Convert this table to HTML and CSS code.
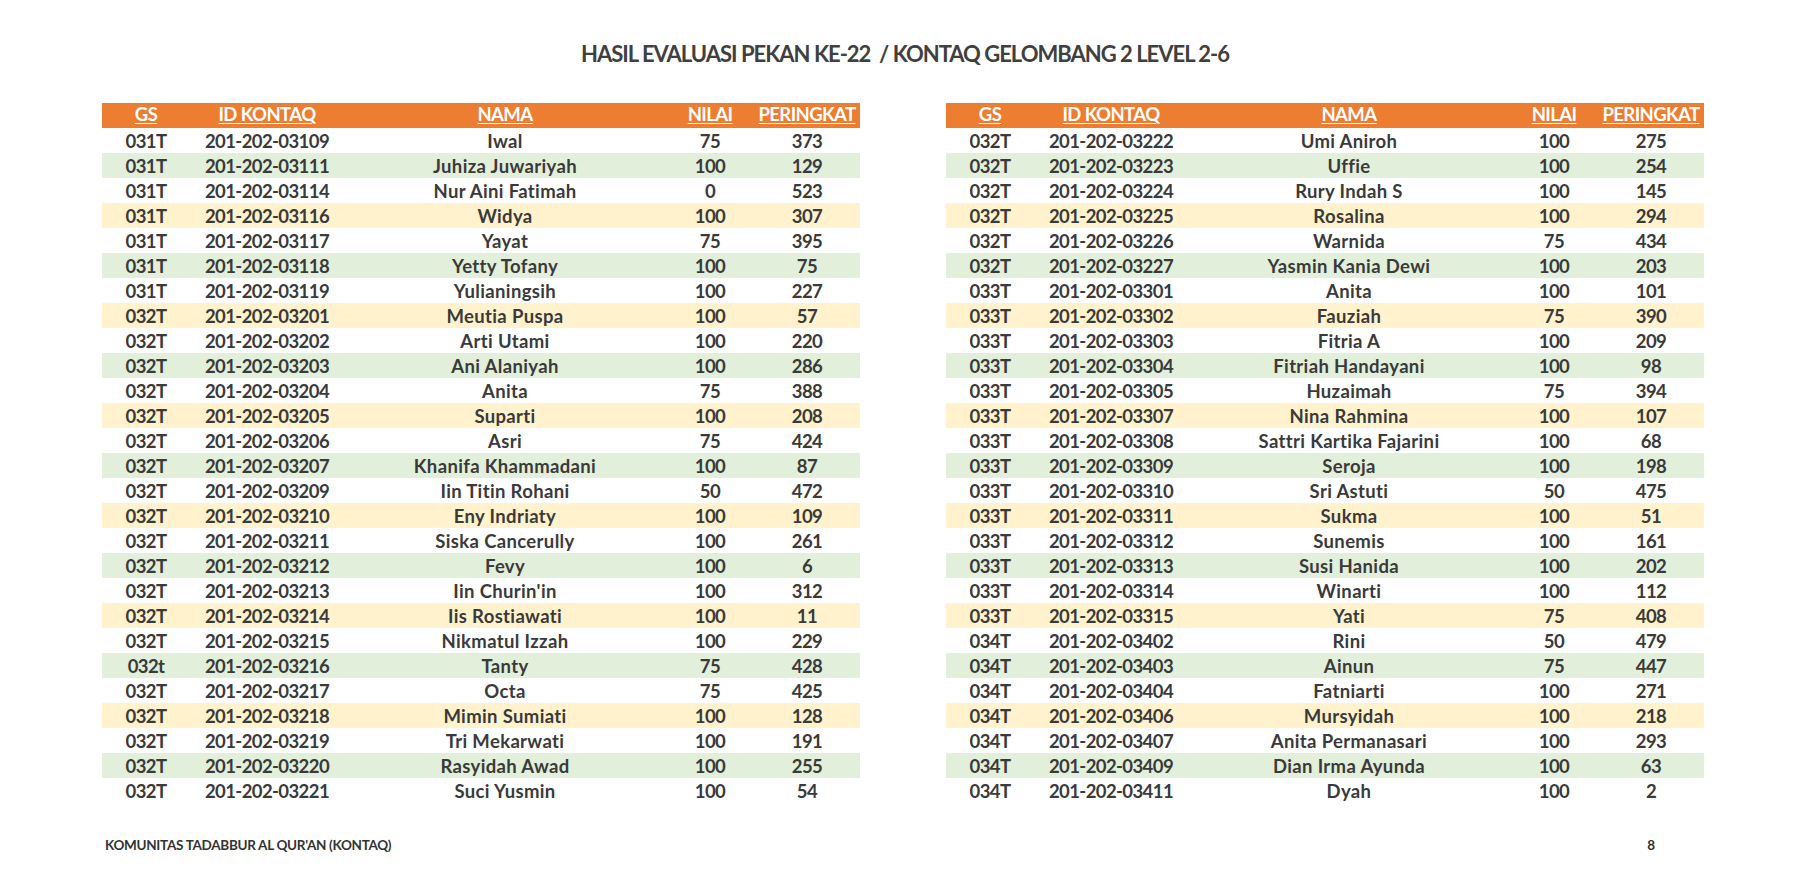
FILE: index.html
```html
<!DOCTYPE html>
<html lang="id">
<head>
<meta charset="utf-8">
<title>Hasil Evaluasi Pekan Ke-22</title>
<link rel="stylesheet" href="styles.css">
</head>
<body>
<div class="page">
  <h1 class="title">HASIL EVALUASI PEKAN KE-22  / KONTAQ GELOMBANG 2 LEVEL 2-6</h1>
  <div class="tables">
    <table class="grid">
      <colgroup><col class="c-gs"><col class="c-id"><col class="c-nama"><col class="c-nilai"><col class="c-rank"></colgroup>
      <thead><tr><th><span>GS</span></th><th><span>ID KONTAQ</span></th><th><span>NAMA</span></th><th><span>NILAI</span></th><th><span>PERINGKAT</span></th></tr></thead>
      <tbody>
        <tr><td>031T</td><td>201-202-03109</td><td>Iwal</td><td>75</td><td>373</td></tr>
        <tr><td>031T</td><td>201-202-03111</td><td>Juhiza Juwariyah</td><td>100</td><td>129</td></tr>
        <tr><td>031T</td><td>201-202-03114</td><td>Nur Aini Fatimah</td><td>0</td><td>523</td></tr>
        <tr><td>031T</td><td>201-202-03116</td><td>Widya</td><td>100</td><td>307</td></tr>
        <tr><td>031T</td><td>201-202-03117</td><td>Yayat</td><td>75</td><td>395</td></tr>
        <tr><td>031T</td><td>201-202-03118</td><td>Yetty Tofany</td><td>100</td><td>75</td></tr>
        <tr><td>031T</td><td>201-202-03119</td><td>Yulianingsih</td><td>100</td><td>227</td></tr>
        <tr><td>032T</td><td>201-202-03201</td><td>Meutia Puspa</td><td>100</td><td>57</td></tr>
        <tr><td>032T</td><td>201-202-03202</td><td>Arti Utami</td><td>100</td><td>220</td></tr>
        <tr><td>032T</td><td>201-202-03203</td><td>Ani Alaniyah</td><td>100</td><td>286</td></tr>
        <tr><td>032T</td><td>201-202-03204</td><td>Anita</td><td>75</td><td>388</td></tr>
        <tr><td>032T</td><td>201-202-03205</td><td>Suparti</td><td>100</td><td>208</td></tr>
        <tr><td>032T</td><td>201-202-03206</td><td>Asri</td><td>75</td><td>424</td></tr>
        <tr><td>032T</td><td>201-202-03207</td><td>Khanifa Khammadani</td><td>100</td><td>87</td></tr>
        <tr><td>032T</td><td>201-202-03209</td><td>Iin Titin Rohani</td><td>50</td><td>472</td></tr>
        <tr><td>032T</td><td>201-202-03210</td><td>Eny Indriaty</td><td>100</td><td>109</td></tr>
        <tr><td>032T</td><td>201-202-03211</td><td>Siska Cancerully</td><td>100</td><td>261</td></tr>
        <tr><td>032T</td><td>201-202-03212</td><td>Fevy</td><td>100</td><td>6</td></tr>
        <tr><td>032T</td><td>201-202-03213</td><td>Iin Churin'in</td><td>100</td><td>312</td></tr>
        <tr><td>032T</td><td>201-202-03214</td><td>Iis Rostiawati</td><td>100</td><td>11</td></tr>
        <tr><td>032T</td><td>201-202-03215</td><td>Nikmatul Izzah</td><td>100</td><td>229</td></tr>
        <tr><td>032t</td><td>201-202-03216</td><td>Tanty</td><td>75</td><td>428</td></tr>
        <tr><td>032T</td><td>201-202-03217</td><td>Octa</td><td>75</td><td>425</td></tr>
        <tr><td>032T</td><td>201-202-03218</td><td>Mimin Sumiati</td><td>100</td><td>128</td></tr>
        <tr><td>032T</td><td>201-202-03219</td><td>Tri Mekarwati</td><td>100</td><td>191</td></tr>
        <tr><td>032T</td><td>201-202-03220</td><td>Rasyidah Awad</td><td>100</td><td>255</td></tr>
        <tr><td>032T</td><td>201-202-03221</td><td>Suci Yusmin</td><td>100</td><td>54</td></tr>
      </tbody>
    </table>
    <table class="grid">
      <colgroup><col class="c-gs"><col class="c-id"><col class="c-nama"><col class="c-nilai"><col class="c-rank"></colgroup>
      <thead><tr><th><span>GS</span></th><th><span>ID KONTAQ</span></th><th><span>NAMA</span></th><th><span>NILAI</span></th><th><span>PERINGKAT</span></th></tr></thead>
      <tbody>
        <tr><td>032T</td><td>201-202-03222</td><td>Umi Aniroh</td><td>100</td><td>275</td></tr>
        <tr><td>032T</td><td>201-202-03223</td><td>Uffie</td><td>100</td><td>254</td></tr>
        <tr><td>032T</td><td>201-202-03224</td><td>Rury Indah S</td><td>100</td><td>145</td></tr>
        <tr><td>032T</td><td>201-202-03225</td><td>Rosalina</td><td>100</td><td>294</td></tr>
        <tr><td>032T</td><td>201-202-03226</td><td>Warnida</td><td>75</td><td>434</td></tr>
        <tr><td>032T</td><td>201-202-03227</td><td>Yasmin Kania Dewi</td><td>100</td><td>203</td></tr>
        <tr><td>033T</td><td>201-202-03301</td><td>Anita</td><td>100</td><td>101</td></tr>
        <tr><td>033T</td><td>201-202-03302</td><td>Fauziah</td><td>75</td><td>390</td></tr>
        <tr><td>033T</td><td>201-202-03303</td><td>Fitria A</td><td>100</td><td>209</td></tr>
        <tr><td>033T</td><td>201-202-03304</td><td>Fitriah Handayani</td><td>100</td><td>98</td></tr>
        <tr><td>033T</td><td>201-202-03305</td><td>Huzaimah</td><td>75</td><td>394</td></tr>
        <tr><td>033T</td><td>201-202-03307</td><td>Nina Rahmina</td><td>100</td><td>107</td></tr>
        <tr><td>033T</td><td>201-202-03308</td><td>Sattri Kartika Fajarini</td><td>100</td><td>68</td></tr>
        <tr><td>033T</td><td>201-202-03309</td><td>Seroja</td><td>100</td><td>198</td></tr>
        <tr><td>033T</td><td>201-202-03310</td><td>Sri Astuti</td><td>50</td><td>475</td></tr>
        <tr><td>033T</td><td>201-202-03311</td><td>Sukma</td><td>100</td><td>51</td></tr>
        <tr><td>033T</td><td>201-202-03312</td><td>Sunemis</td><td>100</td><td>161</td></tr>
        <tr><td>033T</td><td>201-202-03313</td><td>Susi Hanida</td><td>100</td><td>202</td></tr>
        <tr><td>033T</td><td>201-202-03314</td><td>Winarti</td><td>100</td><td>112</td></tr>
        <tr><td>033T</td><td>201-202-03315</td><td>Yati</td><td>75</td><td>408</td></tr>
        <tr><td>034T</td><td>201-202-03402</td><td>Rini</td><td>50</td><td>479</td></tr>
        <tr><td>034T</td><td>201-202-03403</td><td>Ainun</td><td>75</td><td>447</td></tr>
        <tr><td>034T</td><td>201-202-03404</td><td>Fatniarti</td><td>100</td><td>271</td></tr>
        <tr><td>034T</td><td>201-202-03406</td><td>Mursyidah</td><td>100</td><td>218</td></tr>
        <tr><td>034T</td><td>201-202-03407</td><td>Anita Permanasari</td><td>100</td><td>293</td></tr>
        <tr><td>034T</td><td>201-202-03409</td><td>Dian Irma Ayunda</td><td>100</td><td>63</td></tr>
        <tr><td>034T</td><td>201-202-03411</td><td>Dyah</td><td>100</td><td>2</td></tr>
      </tbody>
    </table>
  </div>
  <footer class="footer">
    <div class="footer-left">KOMUNITAS TADABBUR AL QUR'AN (KONTAQ)</div>
    <div class="footer-page">8</div>
  </footer>
</div>
</body>
</html>
```
FILE: styles.css
```css
html, body {
  margin: 0;
  padding: 0;
  background: #ffffff;
}

.page {
  width: 1816px;
  height: 876px;
  overflow: hidden;
  font-family: Lato, "Noto Sans", "DejaVu Sans", sans-serif;
  font-weight: 700;
  color: #3a3a3a;
}

.title {
  margin: 0;
  padding-top: 41px;
  height: 26px;
  line-height: 26px;
  font-size: 22px;
  font-weight: 700;
  letter-spacing: -1px;
  color: #404040;
  text-align: center;
  white-space: pre;
  padding-right: 6px;
}

.tables {
  display: flex;
  gap: 86px;
  padding-left: 102px;
  margin-top: 36px;
}

.grid {
  width: 758px;
  table-layout: fixed;
  border-collapse: collapse;
  border-spacing: 0;
  font-size: 18.5px;
  letter-spacing: -0.6px;
}

.c-gs { width: 88px; }
.c-id { width: 154px; }
.c-nama { width: 322px; }
.c-nilai { width: 88px; }
.c-rank { width: 106px; }

.grid th {
  background: #ed7d31;
  color: #ffffff;
  font-weight: 700;
  height: 25px;
  padding: 0 0 2px;
  box-sizing: border-box;
  line-height: 23px;
  text-align: center;
  white-space: nowrap;
}

.grid th span {
  text-decoration: underline;
  text-decoration-thickness: 1px;
  text-underline-offset: 2px;
}

.grid td {
  height: 25px;
  padding: 2px 0 0;
  box-sizing: border-box;
  line-height: 23px;
  text-align: center;
  white-space: nowrap;
  overflow: hidden;
}

.grid td:nth-child(3) {
  letter-spacing: 0.35px;
}

.grid tbody tr:nth-child(4n+2) td { background: #e2efda; }
.grid tbody tr:nth-child(4n) td { background: #fff2cc; }

.footer {
  display: flex;
  align-items: baseline;
  margin-top: 34px;
  padding-left: 105px;
  font-size: 13.5px;
  line-height: 16px;
  letter-spacing: -0.3px;
  color: #333333;
}

.footer-left {
  width: 1492px;
}

.footer-page {
  width: 108px;
  text-align: center;
}
```
